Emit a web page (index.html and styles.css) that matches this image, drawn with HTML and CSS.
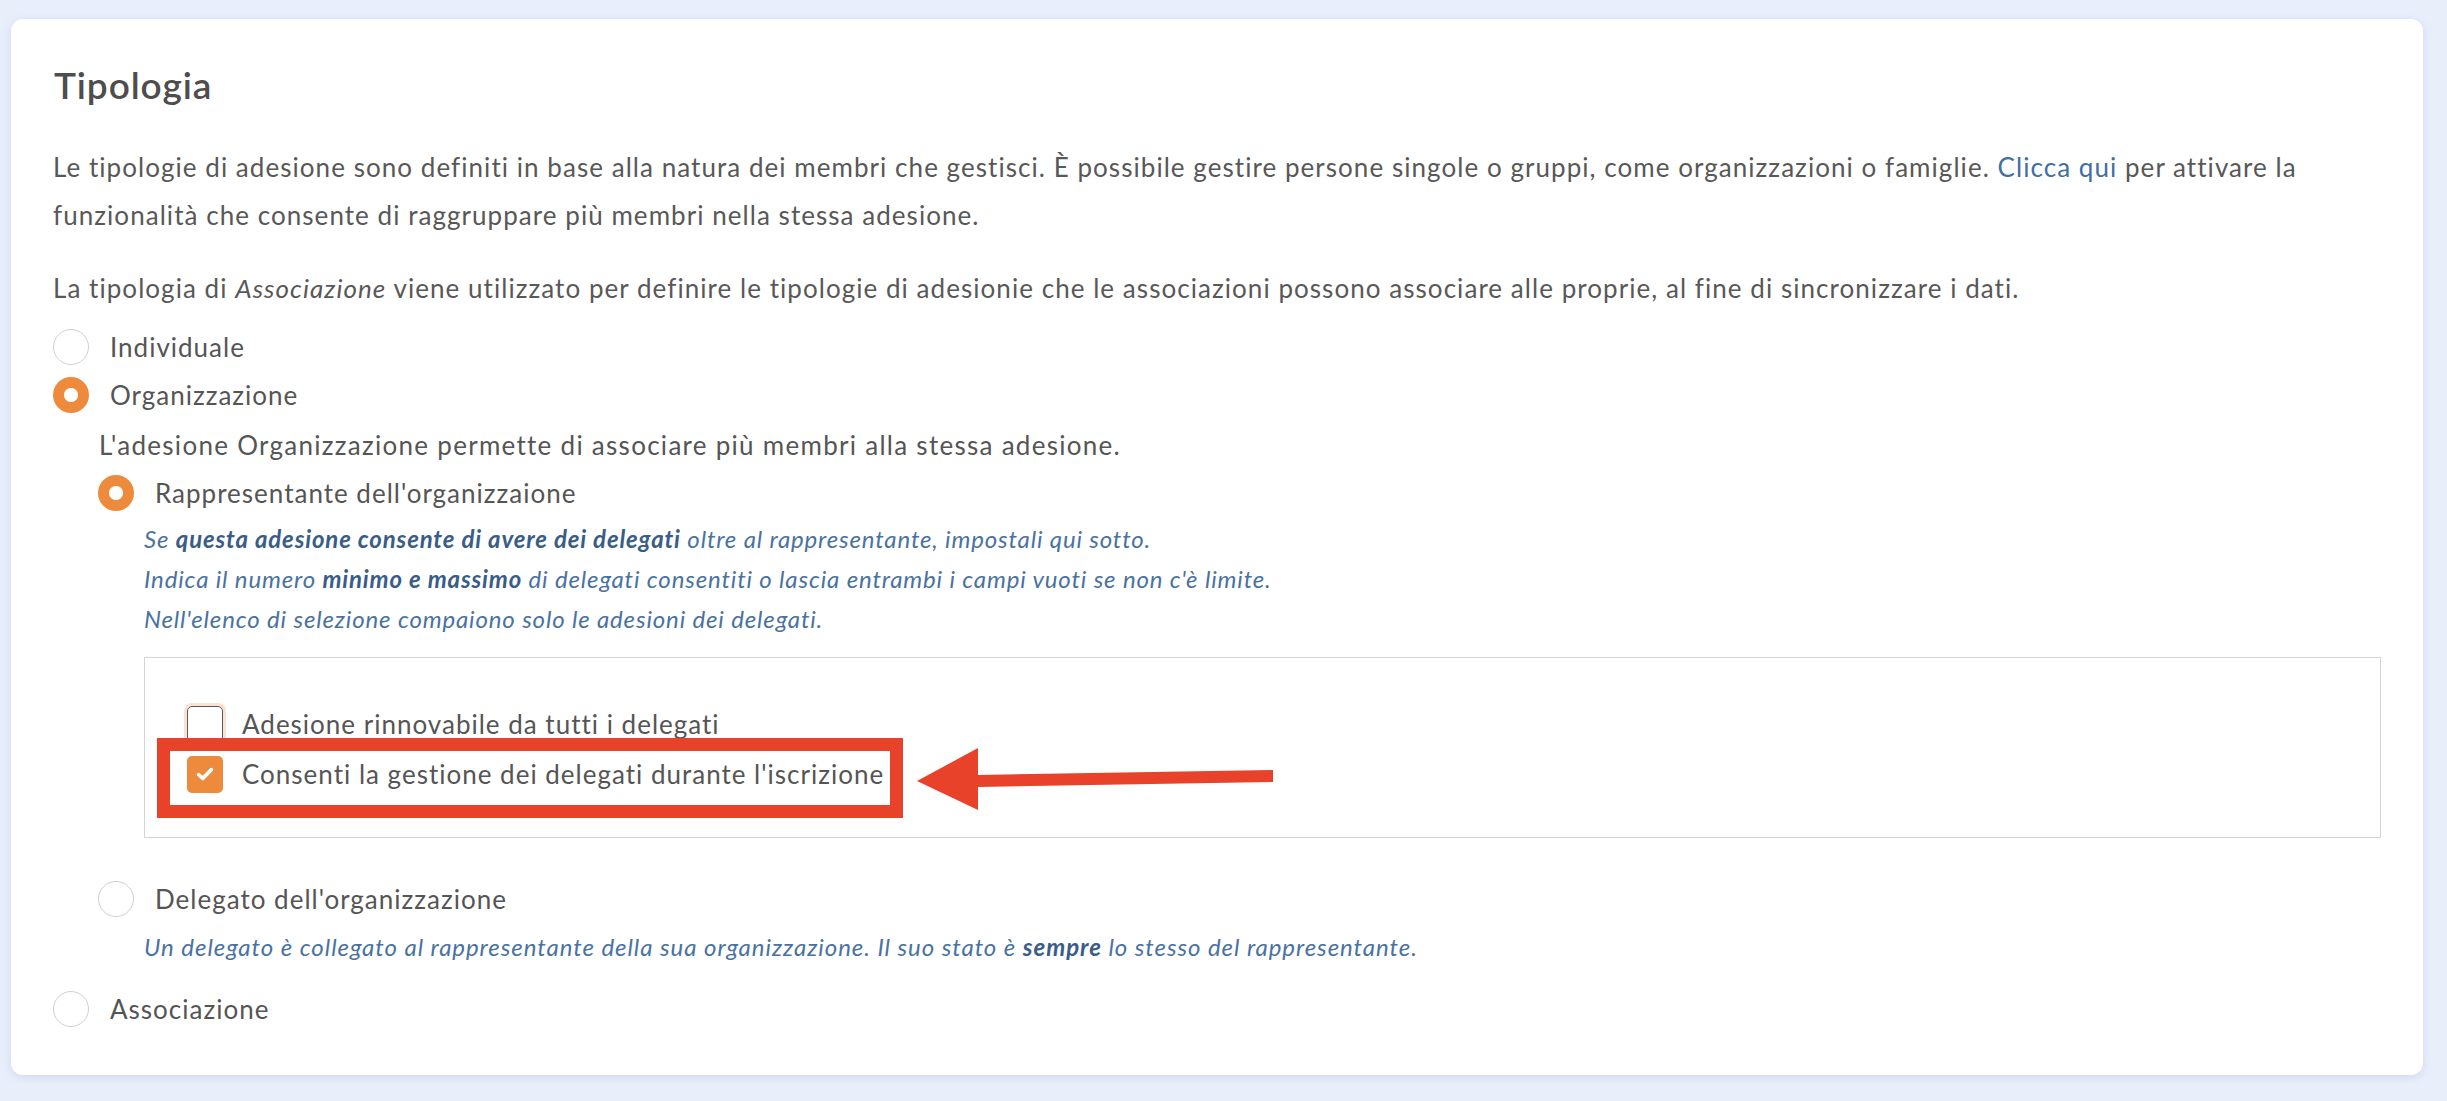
FILE: index.html
```html
<!DOCTYPE html>
<html lang="it">
<head>
<meta charset="utf-8">
<title>Tipologia</title>
<link rel="stylesheet" href="styles.css">
</head>
<body>
<div class="page">
  <section class="card">
    <h2 class="title">Tipologia</h2>
    <p class="para">Le tipologie di adesione sono definiti in base alla natura dei membri che gestisci. È possibile gestire persone singole o gruppi, come organizzazioni o famiglie. <a class="link" href="#">Clicca qui</a> per attivare la funzionalità che consente di raggruppare più membri nella stessa adesione.</p>
    <p class="para para-2">La tipologia di <em>Associazione</em> viene utilizzato per definire le tipologie di adesionie che le associazioni possono associare alle proprie, al fine di sincronizzare i dati.</p>

    <div class="options">
      <div class="radio-row">
        <span class="radio"></span>
        <span class="label">Individuale</span>
      </div>
      <div class="radio-row">
        <span class="radio checked"></span>
        <span class="label">Organizzazione</span>
      </div>
      <div class="sub">
        <div class="sub-desc">L'adesione Organizzazione permette di associare più membri alla stessa adesione.</div>
        <div class="radio-row">
          <span class="radio checked"></span>
          <span class="label">Rappresentante dell'organizzaione</span>
        </div>
        <div class="sub-inner">
          <div class="hints">
            <div class="hint">Se <b>questa adesione consente di avere dei delegati</b> oltre al rappresentante, impostali qui sotto.</div>
            <div class="hint">Indica il numero <b>minimo e massimo</b> di delegati consentiti o lascia entrambi i campi vuoti se non c'è limite.</div>
            <div class="hint">Nell'elenco di selezione compaiono solo le adesioni dei delegati.</div>
          </div>
          <div class="box">
            <div class="check-row">
              <span class="checkbox focus"></span>
              <span class="label">Adesione rinnovabile da tutti i delegati</span>
            </div>
            <div class="check-row">
              <span class="checkbox checked">
                <svg viewBox="0 0 18 18" width="22" height="22"><path d="M3.8 9.6 L7.2 12.6 L14.2 5.4" fill="none" stroke="#fff" stroke-width="3" stroke-linecap="round" stroke-linejoin="round"/></svg>
              </span>
              <span class="label">Consenti la gestione dei delegati durante l'iscrizione</span>
            </div>
          </div>
        </div>
        <div class="radio-row delegate-row">
          <span class="radio"></span>
          <span class="label">Delegato dell'organizzazione</span>
        </div>
        <div class="sub-inner">
          <div class="hint delegate-hint">Un delegato è collegato al rappresentante della sua organizzazione. Il suo stato è <b>sempre</b> lo stesso del rappresentante.</div>
        </div>
      </div>
      <div class="radio-row last-row">
        <span class="radio"></span>
        <span class="label">Associazione</span>
      </div>
    </div>

    <div class="highlight"></div>
    <svg class="arrow" viewBox="0 0 356 62" width="356" height="62">
      <polygon points="0,33 61,0 61,27 356,22 356,34 61,39 61,62" fill="#e8432a"/>
    </svg>
  </section>
</div>
</body>
</html>
```
FILE: styles.css
```css
html, body {
  margin: 0;
  padding: 0;
}
body {
  background: #e9eefb;
  font-family: "Lato", "Liberation Sans", sans-serif;
  color: #555555;
}
.page {
  padding: 19px 24px 28px 11px;
}
.card {
  position: relative;
  box-sizing: border-box;
  height: 1056px;
  background: #ffffff;
  border-radius: 12px;
  box-shadow: 0 2px 8px rgba(160, 175, 215, 0.35);
  padding: 44px 42px 0 42px;
}
.title {
  margin: 0 0 36px 1px;
  font-size: 37px;
  line-height: 44px;
  font-weight: 600;
  letter-spacing: 0.9px;
  color: #4d4d4d;
}
.para {
  margin: 0;
  font-size: 26px;
  line-height: 48px;
  letter-spacing: 1.05px;
  color: #585858;
}
.para-2 {
  margin-top: 25px;
}
.para em {
  font-style: italic;
}
.link {
  color: #3f6fa3;
  text-decoration: none;
}
.options {
  margin-top: 11px;
}
.radio-row {
  display: flex;
  align-items: center;
  height: 48px;
}
.radio {
  box-sizing: border-box;
  flex: 0 0 auto;
  width: 36px;
  height: 36px;
  border-radius: 50%;
  border: 1px solid #cfcfcf;
  background: #fff;
  margin-right: 21px;
}
.radio.checked {
  border: none;
  background: radial-gradient(circle, #ffffff 0 6.5px, #ee8a3c 7.5px);
}
.label {
  font-size: 26px;
  letter-spacing: 1px;
  color: #555555;
  white-space: nowrap;
}
.sub {
  padding-left: 45px;
}
.sub-desc {
  font-size: 26px;
  line-height: 48px;
  letter-spacing: 1.28px;
  color: #555555;
  margin-top: 2px;
  margin-left: 1px;
}
.sub-inner {
  padding-left: 46px;
}
.hints {
  margin-top: 2px;
}
.hint {
  font-size: 24px;
  line-height: 40px;
  letter-spacing: 0.85px;
  font-style: italic;
  color: #4a72a0;
}
.hint b {
  font-weight: 700;
  color: #3a5d88;
}
.box {
  margin-top: 18px;
  box-sizing: border-box;
  height: 181px;
  border: 1px solid #d3d6d9;
  padding: 41px 0 0 42px;
}
.check-row {
  display: flex;
  align-items: center;
  height: 50px;
}
.checkbox {
  box-sizing: border-box;
  flex: 0 0 auto;
  width: 36px;
  height: 37px;
  border-radius: 5px;
  margin-right: 19px;
  display: flex;
  align-items: center;
  justify-content: center;
}
.checkbox.focus {
  border: 1.5px solid #5a5a5a;
  box-shadow: 0 0 0 3px #fbe2d2;
}
.checkbox.checked {
  background: #ee8a3c;
}
.delegate-row {
  margin-top: 37px;
}
.delegate-hint {
  line-height: 44px;
  margin-top: 2px;
  letter-spacing: 0.95px;
}
.last-row {
  margin-top: 16px;
}
.highlight {
  position: absolute;
  left: 146px;
  top: 719px;
  width: 746px;
  height: 80px;
  box-sizing: border-box;
  border: 13px solid #e8432a;
}
.arrow {
  position: absolute;
  left: 906px;
  top: 729px;
}
```
